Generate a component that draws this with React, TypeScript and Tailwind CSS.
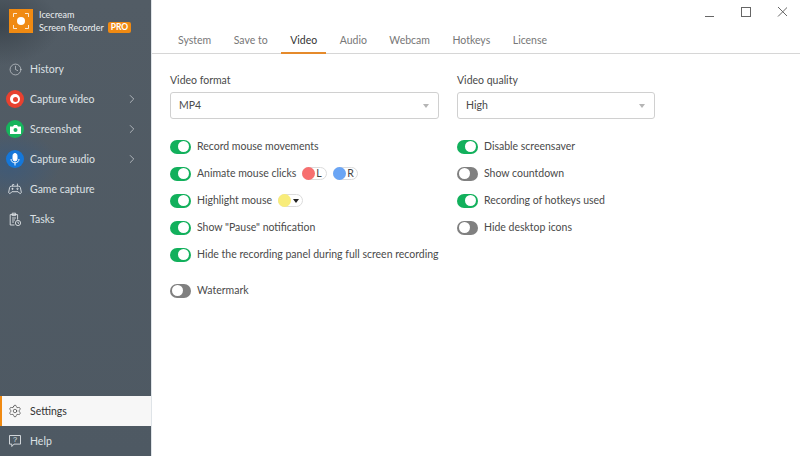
import React from "react";
import { ChevronRight, Clock, Settings } from "lucide-react";

function Toggle({ on }: { on: boolean }) {
  return on ? (
    <span className="flex h-[14px] w-[21px] shrink-0 items-center justify-end rounded-full bg-[#12b05c] pr-[2px]">
      <span className="h-[11px] w-[11px] rounded-full bg-white" />
    </span>
  ) : (
    <span className="flex h-[14px] w-[21px] shrink-0 items-center justify-start rounded-full bg-[#808080] pl-[2px]">
      <span className="h-[11px] w-[11px] rounded-full bg-white" />
    </span>
  );
}

function Row({ on, label, children }: { on: boolean; label: string; children?: React.ReactNode }) {
  return (
    <div className="flex h-[27px] items-center">
      <Toggle on={on} />
      <span className="ml-[6px] whitespace-nowrap pt-px text-[10.5px] text-[#4a4a4a]">{label}</span>
      {children}
    </div>
  );
}

function Select({ value, className }: { value: string; className: string }) {
  return (
    <div className={`flex h-[27px] items-center justify-between rounded-[3px] border border-[#d0d0d0] pl-2 pr-[9px] text-[10.5px] text-[#4a4a4a] ${className}`}>
      <span>{value}</span>
      <span className="h-0 w-0 border-x-[3.5px] border-t-[4px] border-x-transparent border-t-[#b5b5b5]" />
    </div>
  );
}

function Pill({ color, letter, className }: { color: string; letter?: string; className: string }) {
  return (
    <span className={`flex h-[13px] w-[25px] items-center rounded-full border border-[#dcdcdc] ${className}`}>
      <span className={`-ml-px h-[13px] w-[13px] rounded-full ${color}`} />
      {letter ? (
        <span className="ml-[1px] text-[10.5px] leading-none text-[#444]">{letter}</span>
      ) : (
        <span className="ml-[2px] h-0 w-0 border-x-[3px] border-t-[4px] border-x-transparent border-t-[#222]" />
      )}
    </span>
  );
}

function NavRow({ icon, label, chevron, active }: { icon: React.ReactNode; label: string; chevron?: boolean; active?: boolean }) {
  return (
    <div className={active ? "flex h-[30px] items-center border-l-[2px] border-[#f08a12] bg-[#f7f7f7] pl-[4px] text-[#333]" : "flex h-[30px] items-center pl-[6px] text-[#dde1e4]"}>
      <span className="flex w-[18px] shrink-0 items-center justify-center">{icon}</span>
      <span className="ml-[6px] flex-1 whitespace-nowrap pt-[2px] text-[10.5px]">{label}</span>
      {chevron && <ChevronRight size={14} strokeWidth={1.2} className="mr-[12px] text-[#d5d9dc]" />}
    </div>
  );
}

function Round({ color, children }: { color: string; children: React.ReactNode }) {
  return <span className={`flex h-[18px] w-[18px] items-center justify-center rounded-full ${color}`}>{children}</span>;
}

function GameIcon() {
  return (
    <svg width="14" height="14" viewBox="0 0 14 14" fill="none" stroke="#dfe3e6" strokeWidth="0.9">
      <path d="M3.2 4.2h7.6c.9 0 1.4.6 1.6 1.4l.9 4.6c.2 1.2-1.2 1.8-2 .9l-1.2-1.4H3.9l-1.2 1.4c-.8.9-2.2.3-2-.9l.9-4.6c.2-.8.7-1.4 1.6-1.4z" />
      <path d="M4.6 4.2V2.6h1.6M9.4 4.2V1.6" />
      <path d="M3.5 6.8h2M4.5 5.8v2" />
      <circle cx="9.5" cy="6.8" r=".7" />
    </svg>
  );
}

function TasksIcon() {
  return (
    <svg width="14" height="15" viewBox="0 0 14 15" fill="none" stroke="#dfe3e6" strokeWidth="0.9">
      <path d="M6.5 13H2.2V2.6h7.4v5" />
      <path d="M4.2 1.2h3.4v2.4H4.2z" />
      <path d="M4 6h4M4 8h3M4 10h2" />
      <circle cx="10" cy="11" r="2.6" />
      <path d="M10 9.6V11l1 .6" />
    </svg>
  );
}

function HelpIcon() {
  return (
    <svg width="14" height="14" viewBox="0 0 14 14" fill="none" stroke="#dfe3e6" strokeWidth="0.9">
      <path d="M1.5 1.5h11v8.6H6l-2.2 2.4v-2.4H1.5z" />
      <text x="7" y="8.4" fontSize="7.5" textAnchor="middle" fill="#dfe3e6" stroke="none" fontFamily="Liberation Sans, sans-serif">?</text>
    </svg>
  );
}

export default function App() {
  return (
    <div className="flex h-[456px] w-[800px] overflow-hidden bg-white font-['Lato','Noto_Sans',sans-serif]">
      <aside className="flex h-full w-[152px] shrink-0 flex-col border-r border-[#dfe4e8] bg-[radial-gradient(ellipse_60px_40px_at_0px_25px,#3d464e,transparent),radial-gradient(ellipse_50px_35px_at_10px_165px,#3f5a78,transparent),linear-gradient(#525c65,#4e5963)]">
        <div className="flex h-[54px] items-start pl-[9px] pt-[9px]">
          <div className="flex h-[24px] w-[24px] items-center justify-center bg-[#f08a12]">
            <svg width="16" height="16" viewBox="0 0 16 16" fill="none" stroke="#fff" strokeWidth="0.8">
              <path d="M.5 4V.5H4M12 .5h3.5V4M.5 12v3.5H4M15.5 12v3.5H12" />
              <circle cx="8" cy="8" r="4" fill="#fff" stroke="none" />
            </svg>
          </div>
          <div className="ml-[6px] -mt-[1px] text-[9px] leading-[13px] text-[#eceff1]">
            <div>Icecream</div>
            <div className="flex items-center">
              Screen Recorder
              <span className="ml-[4px] rounded-[2px] bg-[#f08a12] px-[3px] text-[8.5px] font-bold leading-[11px] text-white">PRO</span>
            </div>
          </div>
        </div>
        <NavRow icon={<Clock size={13} strokeWidth={1.1} />} label="History" />
        <NavRow
          chevron
          label="Capture video"
          icon={
            <Round color="bg-[#e8412f]">
              <span className="flex h-[10px] w-[10px] items-center justify-center rounded-full bg-white">
                <span className="h-[5px] w-[5px] rounded-full bg-[#e8412f]" />
              </span>
            </Round>
          }
        />
        <NavRow
          chevron
          label="Screenshot"
          icon={
            <Round color="bg-[#16b45c]">
              <svg width="11" height="9" viewBox="0 0 11 9">
                <path d="M0 1.5h3L4 0h3l1 1.5h3V9H0z" fill="#fff" />
                <circle cx="5.5" cy="5" r="2" fill="#16b45c" />
              </svg>
            </Round>
          }
        />
        <NavRow
          chevron
          label="Capture audio"
          icon={
            <Round color="bg-[#1577d9]">
              <svg width="10" height="13" viewBox="0 0 10 13" fill="none" stroke="#fff" strokeWidth="1">
                <rect x="3" y="0.5" width="4" height="7.5" rx="2" fill="#fff" />
                <path d="M1 6c0 2.4 1.8 3.8 4 3.8S9 8.4 9 6M5 10v2.5" />
              </svg>
            </Round>
          }
        />
        <NavRow icon={<GameIcon />} label="Game capture" />
        <NavRow icon={<TasksIcon />} label="Tasks" />
        <div className="flex-1" />
        <NavRow active icon={<Settings size={14} strokeWidth={1.1} className="text-[#333]" />} label="Settings" />
        <NavRow icon={<HelpIcon />} label="Help" />
      </aside>

      <main className="flex min-w-0 flex-1 flex-col">
        <div className="flex h-[25px] shrink-0 items-start justify-end pr-[13px] pt-[7px] text-[#555]">
          <svg width="82" height="10" viewBox="0 0 82 10" fill="none" stroke="#666" strokeWidth="1">
            <path d="M0 9.5h9" />
            <rect x="36.5" y="0.5" width="9" height="9" />
            <path d="M73 0l9.5 9.5M82.5 0L73 9.5" />
          </svg>
        </div>
        <nav className="flex h-[29px] shrink-0 items-start gap-[4.5px] border-b border-[#d6d6d6] pl-[17px] text-[10.5px] text-[#777]">
          {["System", "Save to", "Video", "Audio", "Webcam", "Hotkeys", "License"].map((t) =>
            t === "Video" ? (
              <span key={t} className="-mb-px flex h-[29px] items-start border-b-[2px] border-[#e58a2b] px-[9px] pt-[8px] text-[#333]">{t}</span>
            ) : (
              <span key={t} className="px-[9px] pt-[8px]">{t}</span>
            )
          )}
        </nav>
        <section className="flex flex-1 pl-[18px] pt-[18px]">
          <div className="w-[287px] shrink-0">
            <div className="h-[20px] text-[10.5px] leading-[16px] text-[#4a4a4a]">Video format</div>
            <Select value="MP4" className="w-[269px]" />
            <div className="mt-[14px]">
              <Row on label="Record mouse movements" />
              <Row on label="Animate mouse clicks">
                <Pill color="bg-[#f76f6f]" letter="L" className="ml-[6px]" />
                <Pill color="bg-[#6aa5f5]" letter="R" className="ml-[6px]" />
              </Row>
              <Row on label="Highlight mouse">
                <Pill color="bg-[#f8ec7a]" className="ml-[6px]" />
              </Row>
              <Row on label={'Show "Pause" notification'} />
              <Row on label="Hide the recording panel during full screen recording" />
              <div className="mt-[9px]">
                <Row on={false} label="Watermark" />
              </div>
            </div>
          </div>
          <div className="w-[198px] shrink-0">
            <div className="h-[20px] text-[10.5px] leading-[16px] text-[#4a4a4a]">Video quality</div>
            <Select value="High" className="w-[198px]" />
            <div className="mt-[14px]">
              <Row on label="Disable screensaver" />
              <Row on={false} label="Show countdown" />
              <Row on label="Recording of hotkeys used" />
              <Row on={false} label="Hide desktop icons" />
            </div>
          </div>
        </section>
      </main>
    </div>
  );
}
